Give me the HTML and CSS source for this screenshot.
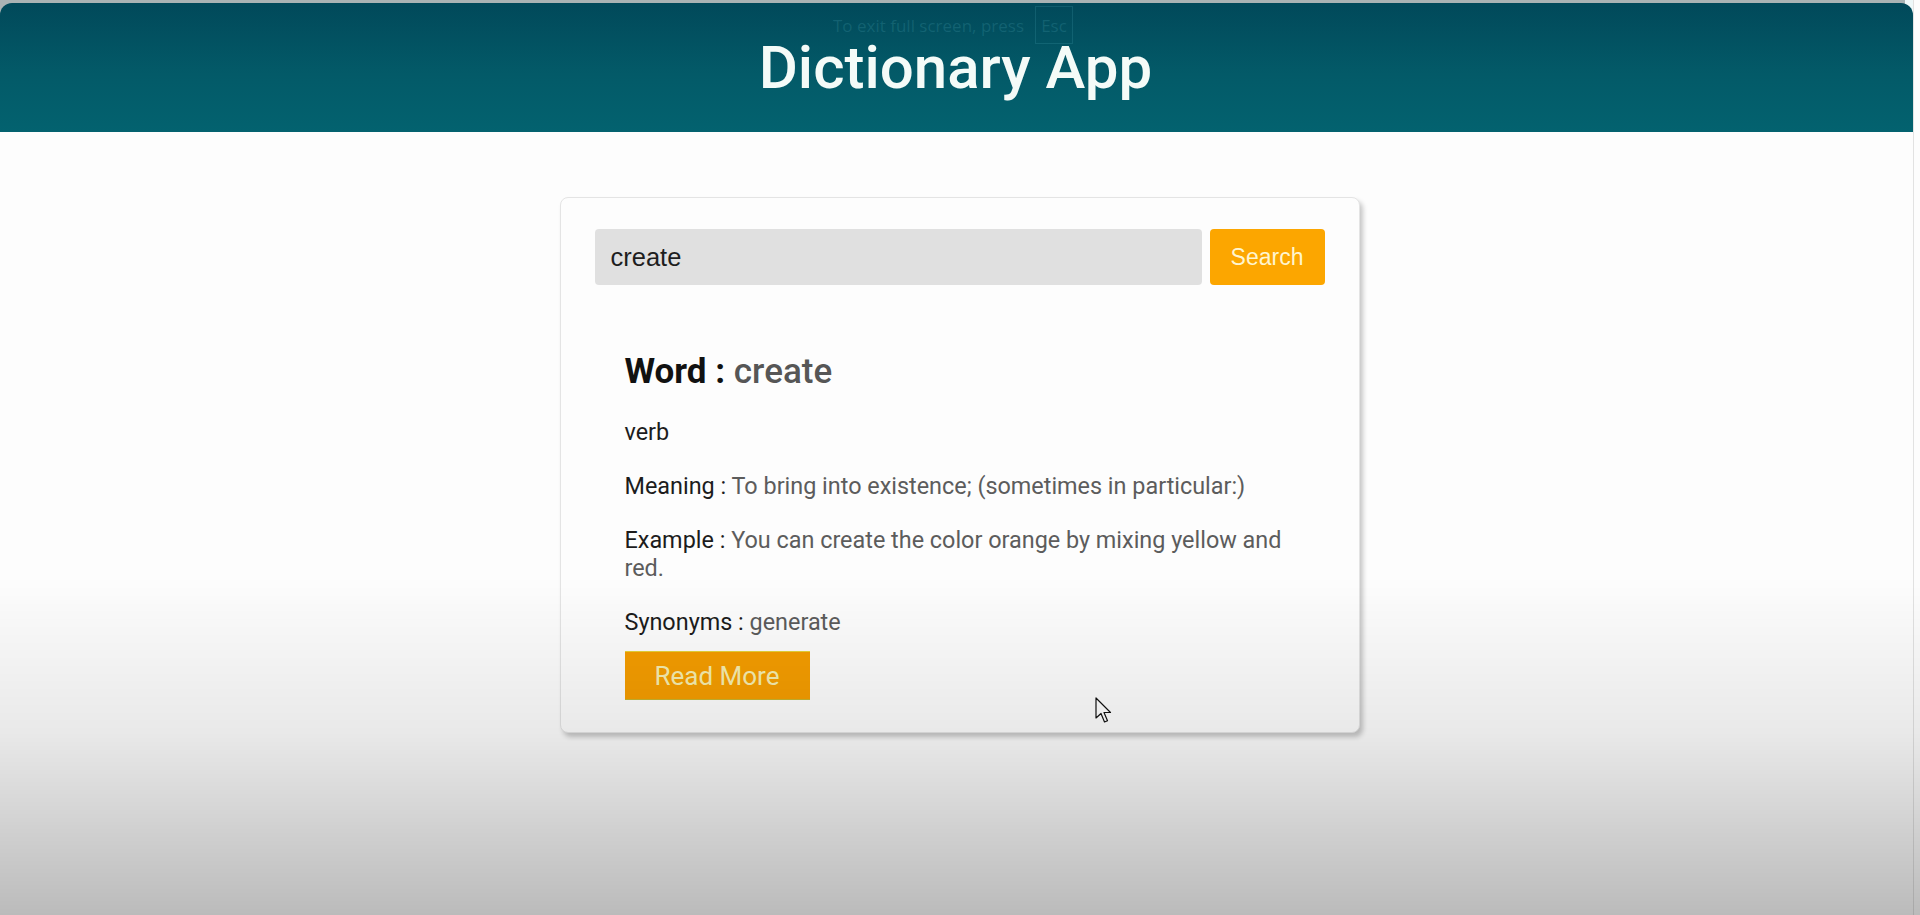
FILE: index.html
```html
<!DOCTYPE html>
<html lang="en">
<head>
<meta charset="utf-8">
<title>Dictionary App</title>
<link rel="stylesheet" href="styles.css">
</head>
<body>
<div class="screen">
  <header class="app-header">
    <h1 class="app-title">Dictionary App</h1>
  </header>
  <main class="main">
    <section class="card">
      <form class="search-row">
        <input class="search-input" type="text" value="create">
        <button class="search-btn" type="button">Search</button>
      </form>
      <div class="result">
        <h2 class="word">Word : <span class="word-value">create</span></h2>
        <p class="pos">verb</p>
        <p class="row"><span class="label">Meaning :</span> <span class="val">To bring into existence; (sometimes in particular:)</span></p>
        <p class="row"><span class="label">Example :</span> <span class="val">You can create the color orange by mixing yellow and red.</span></p>
        <p class="row last"><span class="label">Synonyms :</span> <span class="val">generate</span></p>
        <button class="read-more" type="button">Read More</button>
      </div>
    </section>
  </main>
</div>
<div class="fs-notice">To exit full screen, press <span class="esc">Esc</span></div>
<svg class="cursor" width="18" height="28" viewBox="0 0 18 28"><path d="M1 1 L1 21 L6 16.5 L9.5 25 L12.5 23.7 L9 15.5 L15.5 15.5 Z" fill="#fff" stroke="#111" stroke-width="1.2" stroke-linejoin="round"/></svg>
<div class="shade"></div>
</body>
</html>
```
FILE: styles.css
```css
html, body {
  margin: 0;
  padding: 0;
  height: 100%;
}
body {
  background: #fdfdfd;
  font-family: Roboto, "Noto Sans", Arial, sans-serif;
  overflow: hidden;
  position: relative;
}
.screen {
  min-height: 100%;
  padding-top: 3px;
  background: linear-gradient(to right, #aab3b4 0, #aab3b4 calc(100% - 8px), #eef8f9 calc(100% - 8px)) top / 100% 20px no-repeat, #fdfdfd;
  border-right: 1px solid #e2e2e2;
  box-sizing: border-box;
  margin-right: 6px;
}
.app-header {
  height: 129px;
  display: flex;
  align-items: center;
  justify-content: center;
  background: linear-gradient(to bottom, #01495a 0%, #035a68 55%, #03626f 100%);
  border-radius: 12px 12px 0 0;
}
.app-title {
  margin: 0;
  font-family: Roboto, sans-serif;
  font-weight: 500;
  font-size: 60px;
  color: #f4fbf8;
  letter-spacing: 0;
  padding-right: 2px;
}
.main {
  display: flex;
  justify-content: center;
  padding-top: 65px;
  padding-left: 6px;
}
.card {
  width: 800px;
  box-sizing: border-box;
  padding: 31px 34px 32px;
  background: #fdfdfd;
  border: 1px solid #e4e4e4;
  border-radius: 8px;
  box-shadow: 3px 4px 5px rgba(0, 0, 0, 0.22);
}
.search-row {
  display: flex;
  gap: 8px;
  margin: 0;
}
.search-input {
  flex: 1;
  height: 56px;
  box-sizing: border-box;
  border: none;
  border-radius: 4px;
  background: #e0e0e0;
  padding: 0 16px;
  font-family: "Liberation Sans", Arial, sans-serif;
  font-size: 25.5px;
  color: #1e1e1e;
  outline: none;
}
.search-btn {
  width: 115px;
  height: 56px;
  border: none;
  border-radius: 4px;
  background: #fca600;
  color: #fff5cf;
  font-family: "Liberation Sans", Arial, sans-serif;
  font-size: 23px;
  padding: 0;
}
.result {
  padding: 66px 30px 0;
}
.word {
  margin: 0 0 25px;
  font-size: 35px;
  line-height: 42px;
  font-weight: 700;
  color: #111;
}
.word-value {
  color: #565656;
  font-weight: 500;
}
.pos, .row {
  margin: 0 0 26px;
  font-size: 23.4px;
  line-height: 28px;
  color: #1c1c1c;
}
.row.last {
  margin-bottom: 15px;
}
.label {
  color: #1c1c1c;
}
.val {
  color: #5c5c5c;
}
.read-more {
  display: block;
  width: 185px;
  height: 49px;
  box-sizing: border-box;
  background: #f59d00;
  border: none;
  border-top: 1px solid #e6d23a;
  border-bottom: 1px solid #c9b52e;
  color: #f6eeb0;
  font-family: Roboto, sans-serif;
  font-size: 26px;
  padding: 0;
}
.fs-notice {
  position: absolute;
  top: 6px;
  left: 833px;
  height: 38px;
  display: flex;
  align-items: center;
  gap: 11px;
  font-family: "Open Sans", sans-serif;
  font-size: 17px;
  color: rgba(80, 170, 185, 0.22);
}
.esc {
  display: inline-flex;
  align-items: center;
  justify-content: center;
  width: 38px;
  height: 38px;
  border: 1px solid rgba(80, 170, 185, 0.2);
  box-sizing: border-box;
}
.cursor {
  position: absolute;
  left: 1095px;
  top: 697px;
}
.shade {
  position: fixed;
  inset: 0;
  pointer-events: none;
  background: linear-gradient(to bottom, rgba(0, 0, 0, 0) 0%, rgba(0, 0, 0, 0) 63%, rgba(0, 0, 0, 0.08) 80%, rgba(0, 0, 0, 0.26) 100%);
}
```
